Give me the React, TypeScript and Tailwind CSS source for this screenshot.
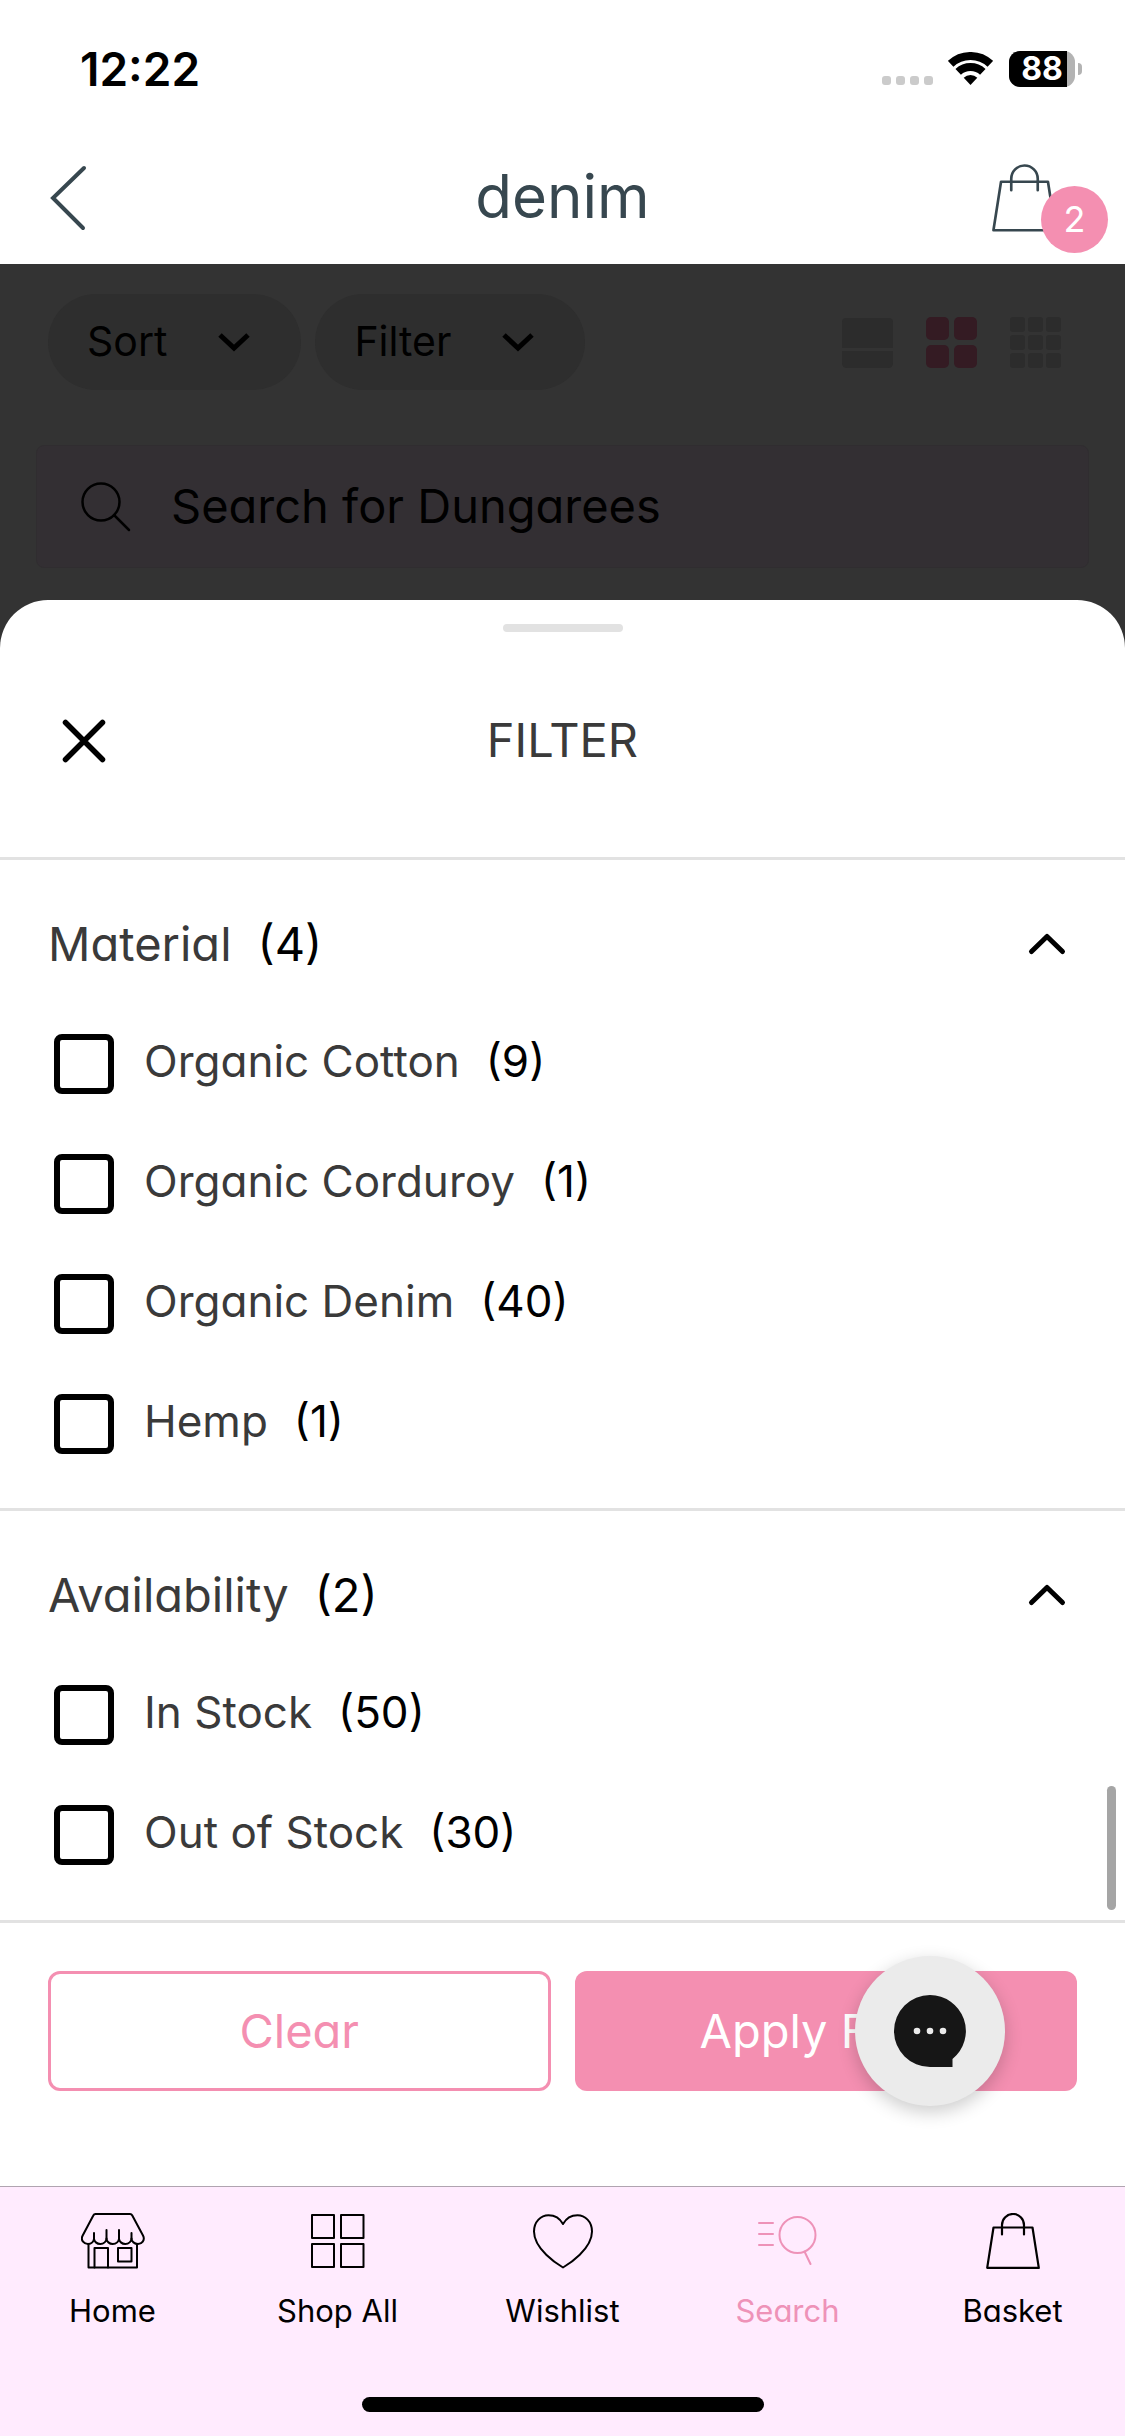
import { useState } from 'react';

type Option = { name: string; count: number };
type Group = { title: string; options: Option[] };

const GROUPS: Group[] = [
  {
    title: 'Material',
    options: [
      { name: 'Organic Cotton', count: 9 },
      { name: 'Organic Corduroy', count: 1 },
      { name: 'Organic Denim', count: 40 },
      { name: 'Hemp', count: 1 },
    ],
  },
  {
    title: 'Availability',
    options: [
      { name: 'In Stock', count: 50 },
      { name: 'Out of Stock', count: 30 },
    ],
  },
];

function BagIcon({ className }: { className: string }) {
  return (
    <svg viewBox="0 0 54 56" className={className} fill="none" stroke="currentColor" strokeWidth="2.2" strokeLinecap="round" strokeLinejoin="round">
      <path d="M7.5 14.5h39L52.8 54.8H1.2z" />
      <path d="M16 21.500V12a11 11 0 0 1 22 0v9.500" />
    </svg>
  );
}

function HomeIcon() {
  return (
    <svg viewBox="0 0 64 56" className="w-16 h-14" fill="none" stroke="currentColor" strokeWidth="2" strokeLinecap="round" strokeLinejoin="round">
      <path d="M14.500 1h34.500q1.500 0 2.300 1.500L62 22.500c2.500 5-1.500 8.500-5 8.500-3.500 0-6.500-2.500-6.500-5.500 0 3-2.800 5.500-6.200 5.500S38 28.500 38 25.500c0 3-2.800 5.500-6.200 5.500s-6.300-2.500-6.300-5.500c0 3-2.800 5.500-6.200 5.500S13 28.500 13 25.500c0 3-2.500 5.500-6 5.500s-8-3.500-5.300-8.500L12.300 2.500Q13 1 14.500 1z" />
      <path d="M13 20v6M25.500 17v9M38 17v9M50.500 20v6" />
      <path d="M7.500 31v23.500h48.500V31" />
      <path d="M13.500 54.500V35H27v19.500M37 35h13.500v13.500H37z" />
    </svg>
  );
}

function GridIcon() {
  return (
    <svg viewBox="0 0 54 54" className="size-[54px]" fill="none" stroke="currentColor" strokeWidth="2" strokeLinejoin="round">
      <path d="M1 1h22v23H1zM30 1h22.500v23H30zM1 30h22v23H1zM30 30h22.500v23H30z" />
    </svg>
  );
}

function HeartIcon() {
  return (
    <svg viewBox="0 0 60 55" className="w-[60px] h-[55px]" fill="none" stroke="currentColor" strokeWidth="2" strokeLinejoin="round">
      <path d="M30 53.500C24 50 1 35 1 17.500 1 7.500 8 1.200 15.500 1.200 22 1.200 27 4.500 30 10c3-5.500 8-8.800 14.500-8.800C52 1.200 59 7.500 59 17.500 59 35 36 50 30 53.500z" />
    </svg>
  );
}

function SearchListIcon() {
  return (
    <svg viewBox="0 0 60 50" className="w-[60px] h-[50px]" fill="none" stroke="currentColor" strokeWidth="2" strokeLinecap="round">
      <path d="M1 7h14M1 18h14M1 29h14M46.500 35.500l6 12.500" />
      <circle cx="39.500" cy="19" r="18" />
    </svg>
  );
}

const TABS = [
  { label: 'Home', icon: <HomeIcon /> },
  { label: 'Shop All', icon: <GridIcon /> },
  { label: 'Wishlist', icon: <HeartIcon /> },
  { label: 'Search', icon: <SearchListIcon />, active: true },
  { label: 'Basket', icon: <BagIcon className="w-[54px] h-14" /> },
];

function StatusBar() {
  return (
    <div className="flex items-center justify-between h-[132px] pt-1.5 pl-20 pr-[43px] text-black">
      <span className="text-[46px] font-semibold">12:22</span>
      <div className="flex items-center">
        <div className="flex gap-[5px] mt-[22px] mr-[15px]">
          {[0, 1, 2, 3].map(i => (
            <span key={i} className="size-[9px] rounded-[3px] bg-[#cbcbcb]" />
          ))}
        </div>
        <svg viewBox="0 0 45 34" className="w-[45px] h-[34px] mr-4" fill="none" stroke="currentColor" strokeWidth="8">
          <path d="M2.700 11.800a29 29 0 0 1 39.600 0" />
          <path d="M10.200 19.800a18 18 0 0 1 24.600 0" />
          <path d="M22.500 33l-6.800-7.300a10 10 0 0 1 13.600 0z" fill="currentColor" stroke="none" />
        </svg>
        <div className="relative w-[66px] h-9 rounded-[11px] bg-[#b3b3b3] flex items-center justify-center">
          <span className="absolute inset-y-0 left-0 w-[58px] rounded-l-[11px] bg-black" />
          <span className="relative text-[32px] leading-9 font-bold text-white">88</span>
        </div>
        <span className="w-1 h-3 ml-[3px] rounded-r-full bg-[#b3b3b3]" />
      </div>
    </div>
  );
}

function Header() {
  return (
    <header className="grid grid-cols-[1fr_auto_1fr] items-center h-[132px] px-12 text-[#37474f]">
      <button aria-label="Back" className="justify-self-start">
        <svg viewBox="0 0 40 66" className="w-10 h-[66px]" fill="none" stroke="currentColor" strokeWidth="4" strokeLinecap="round">
          <path d="M36 3L5 33 35 63" />
        </svg>
      </button>
      <h1 className="text-[60px] leading-[72px] pb-1">denim</h1>
      <button aria-label="Basket, 2 items" className="relative justify-self-end mr-5">
        <BagIcon className="w-[65px] h-[68px]" />
        <span className="absolute top-[22px] -right-[51px] size-[67px] rounded-full bg-[#f48fb1] text-white text-[36px] leading-[67px] text-center">2</span>
      </button>
    </header>
  );
}

function DropdownPill({ label }: { label: string }) {
  return (
    <button className="flex items-center gap-[50px] h-24 pl-[39px] pr-[50px] rounded-full bg-[#2e2e2e] text-[41px]">
      {label}
      <svg viewBox="0 0 34 20" className="w-[34px] h-5" fill="none" stroke="currentColor" strokeWidth="5">
        <path d="M3 3l14 13L31 3" />
      </svg>
    </button>
  );
}

function Toolbar() {
  return (
    <div className="pt-[30px] pb-8 text-black">
      <div className="flex items-center h-24 pl-12 pr-16">
        <div className="flex gap-3.5">
          <DropdownPill label="Sort" />
          <DropdownPill label="Filter" />
        </div>
        <div className="flex gap-[33px] ml-auto text-[#2c2c2c]">
          <button aria-label="One column">
            <svg viewBox="0 0 51 51" className="size-[51px]" fill="currentColor">
              <path d="M4 1h43q4 0 4 4v26H0V5q0-4 4-4zM0 34h51v12q0 5-5 5H5q-5 0-5-5z" />
            </svg>
          </button>
          <button aria-label="Two columns" className="text-[#341b23]">
            <svg viewBox="0 0 51 51" className="size-[51px]" fill="currentColor">
              {[0, 28].map(y => [0, 28].map(x => <rect key={`${x}-${y}`} x={x} y={y} width="23" height="23" rx="5" />))}
            </svg>
          </button>
          <button aria-label="Three columns">
            <svg viewBox="0 0 51 51" className="size-[51px]" fill="currentColor">
              {[0, 18, 36].map(y => [0, 18, 36].map(x => <rect key={`${x}-${y}`} x={x} y={y} width="15" height="15" rx="3" />))}
            </svg>
          </button>
        </div>
      </div>
      <label className="flex items-center gap-10 h-[123px] mt-[55px] mx-9 pl-11 rounded-lg border border-[#302d30] bg-[#332f33]">
        <svg viewBox="0 0 50 50" className="size-[50px]" fill="none" stroke="currentColor" strokeWidth="2.500" strokeLinecap="round">
          <circle cx="20" cy="20" r="18.500" />
          <path d="M33 33l15 15" />
        </svg>
        <input
          type="text"
          aria-label="Search products"
          placeholder="Search for Dungarees"
          className="flex-1 min-w-0 bg-transparent text-[47px] outline-none placeholder:text-black"
        />
      </label>
    </div>
  );
}

function FilterGroup({ group, checked, onToggle }: {
  group: Group;
  checked: string[];
  onToggle: (name: string) => void;
}) {
  const [open, setOpen] = useState(true);

  return (
    <section className="py-6 border-b-[3px] border-[#e2e2e2] last:border-b-0">
      <button
        onClick={() => setOpen(!open)}
        aria-expanded={open}
        className="flex items-center w-full h-[120px] pl-12 pr-[58px] text-[47px]"
      >
        <span className="text-[#3a3a3a]">{group.title}</span>
        <span className="ml-[26px] text-black">({group.options.length})</span>
        <svg
          viewBox="0 0 40 24"
          className={`ml-auto w-10 h-6 text-black ${open ? '' : 'rotate-180'}`}
          fill="none"
          stroke="currentColor"
          strokeWidth="5"
          strokeLinecap="round"
          strokeLinejoin="round"
        >
          <path d="M4.500 19.500L20 4.500l15.500 15" />
        </svg>
      </button>
      {open && group.options.map(option => (
        <label key={option.name} className="flex items-center h-[120px] pl-[54px] text-[44px]">
          <input
            type="checkbox"
            checked={checked.includes(option.name)}
            onChange={() => onToggle(option.name)}
            className="appearance-none shrink-0 size-[60px] rounded-lg border-[6px] border-black checked:bg-[#f48fb1]"
          />
          <span className="ml-[30px] pb-1.5 text-[#3a3a3a]">{option.name}</span>
          <span className="ml-[26px] pb-1.5 text-black">({option.count})</span>
        </label>
      ))}
    </section>
  );
}

function FilterSheet() {
  const [checked, setChecked] = useState<string[]>([]);

  const toggle = (name: string) => {
    setChecked(prev => (prev.includes(name) ? prev.filter(n => n !== name) : [...prev, name]));
  };

  return (
    <div role="dialog" aria-label="Filter" className="flex-1 flex flex-col pt-6 rounded-t-[48px] bg-white">
      <div className="w-[120px] h-2 mx-auto rounded-full bg-[#e2e2e2]" />
      <div className="grid grid-cols-[1fr_auto_1fr] items-center h-[228px] pb-2 px-[60px] border-b-[3px] border-[#e2e2e2]">
        <button aria-label="Close" className="justify-self-start text-black">
          <svg viewBox="0 0 48 48" className="size-12" fill="none" stroke="currentColor" strokeWidth="5.500" strokeLinecap="round">
            <path d="M5.500 5.500l37 37M42.500 5.500l-37 37" />
          </svg>
        </button>
        <h2 className="text-[47px] text-[#3a3a3a]">FILTER</h2>
      </div>

      <div className="relative flex-1">
        {/* Scroll thumb */}
        <span className="absolute right-[9px] bottom-2.5 w-[9px] h-[124px] rounded-full bg-[#a5a5a5]" />
        {GROUPS.map(group => (
          <FilterGroup key={group.title} group={group} checked={checked} onToggle={toggle} />
        ))}
      </div>

      <div className="relative grid grid-cols-2 gap-6 pt-12 pb-[95px] px-12 border-t-[3px] border-[#e2e2e2] text-[47px]">
        <button
          onClick={() => setChecked([])}
          className="h-[120px] rounded-xl border-[3px] border-[#f48fb1] text-[#f48fb1]"
        >
          Clear
        </button>
        <button className="h-[120px] rounded-xl bg-[#f48fb1] text-white">Apply Filter</button>

        {/* Chat launcher floats above the actions */}
        <button
          aria-label="Open chat"
          className="absolute top-[33px] right-[120px] size-[150px] rounded-full bg-[#ebebeb] flex items-center justify-center shadow-[0_6px_18px_rgba(0,0,0,0.2)]"
        >
          <svg viewBox="0 0 72 72" className="size-[72px]">
            <path d="M36 0a36 36 0 0 1 22.500 64v8H36a36 36 0 0 1 0-72z" fill="#161616" />
            <g fill="#ebebeb">
              <circle cx="23" cy="36" r="3.300" />
              <circle cx="36" cy="36" r="3.300" />
              <circle cx="49" cy="36" r="3.300" />
            </g>
          </svg>
        </button>
      </div>
    </div>
  );
}

function TabBar() {
  return (
    <nav className="border-t border-[#b0a4b0] bg-[#ffebfe] pt-6 pb-6 text-black">
      <div className="grid grid-cols-5">
        {TABS.map(tab => (
          <a key={tab.label} href="#" className={`flex flex-col items-center ${tab.active ? 'text-[#ee92b8]' : ''}`}>
            <span className="flex items-center justify-center h-[60px]">{tab.icon}</span>
            <span className="mt-4 text-[31px] leading-[48px]">{tab.label}</span>
          </a>
        ))}
      </div>
      <div className="w-[402px] h-[15px] mt-[62px] mx-auto rounded-full bg-black" />
    </nav>
  );
}

export default function App() {
  return (
    <div className="flex flex-col min-h-screen bg-white font-['Inter',sans-serif] [font-feature-settings:'cv11']">
      <StatusBar />
      <Header />
      <main className="flex-1 flex flex-col bg-[#333333]">
        <Toolbar />
        <FilterSheet />
      </main>
      <TabBar />
    </div>
  );
}
